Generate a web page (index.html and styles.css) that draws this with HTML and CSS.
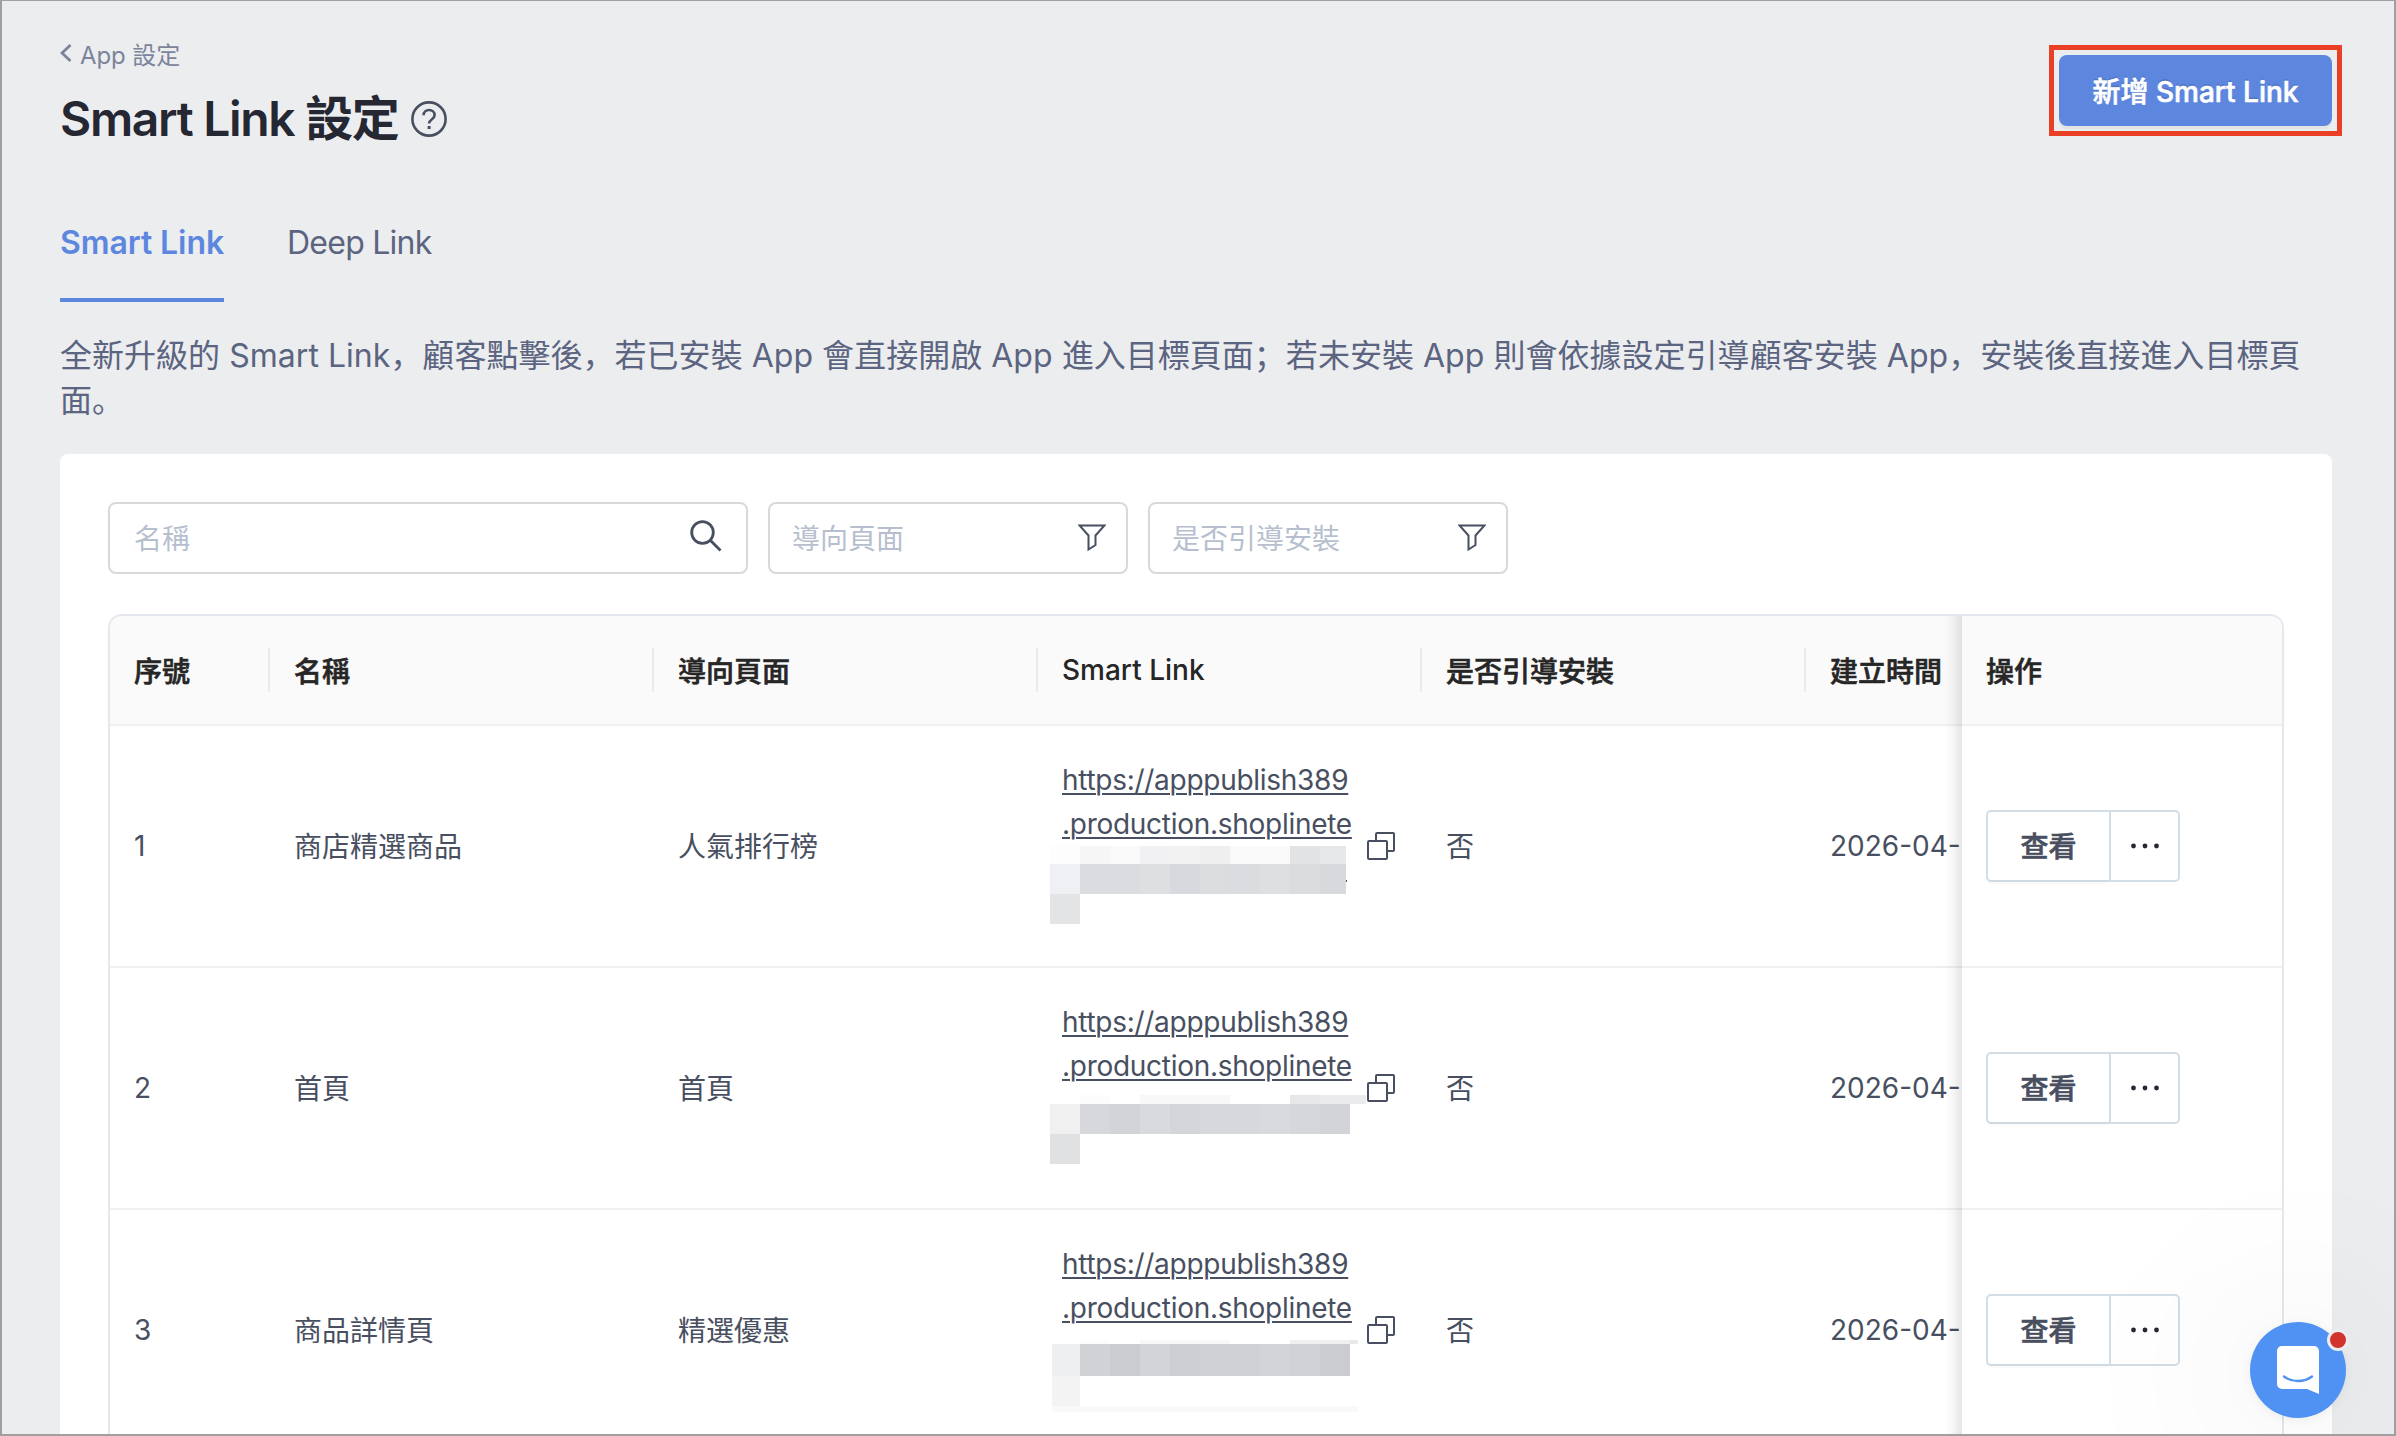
FILE: index.html
```html
<!DOCTYPE html>
<html lang="zh">
<head>
    <meta charset="UTF-8">
    <title>Smart Link 設定</title>
    <link rel="stylesheet" href="styles.css">
</head>
<body>
    <svg class="sprite">
        <symbol id="icon-filter" viewBox="0 0 28 28">
            <path d="M1.5 1.5h25l-9 10v9.5l-7 4.5v-14z" fill="none" stroke="#484f60" stroke-width="2"/>
        </symbol>
        <symbol id="icon-copy" viewBox="0 0 28 28">
            <path d="M9 9V2a1 1 0 0 1 1-1h16a1 1 0 0 1 1 1v16a1 1 0 0 1-1 1h-6M2 9h17a1 1 0 0 1 1 1v16a1 1 0 0 1-1 1H2a1 1 0 0 1-1-1V10a1 1 0 0 1 1-1z" fill="none" stroke="#484f60" stroke-width="2"/>
        </symbol>
        <symbol id="icon-more" viewBox="0 0 30 6">
            <circle cx="3.5" cy="3" r="2.4"/>
            <circle cx="15" cy="3" r="2.4"/>
            <circle cx="26.5" cy="3" r="2.4"/>
        </symbol>
    </svg>
    <header class="page-header">
        <div>
            <a class="back">
                <svg class="back-icon" viewBox="0 0 12 18"><path d="M10.5 1L2 9l8.5 8" fill="none" stroke="#7b849b" stroke-width="2.8"/></svg>
                <span>App 設定</span>
            </a>
            <h1 class="title">
                <span>Smart Link 設定</span>
                <svg class="help-icon" viewBox="0 0 36 36" fill="none" stroke="#484f60">
                    <circle cx="18" cy="18" r="16.6" stroke-width="2.6"/>
                    <path d="M12.6 14.2c0-3.2 2.4-5.2 5.5-5.2s5.5 2 5.5 4.9c0 2.3-1.3 3.4-2.9 4.6-1.7 1.2-2.6 2.1-2.6 4" stroke-width="2.6"/>
                    <path d="M18.1 25v3" stroke-width="3"/>
                </svg>
            </h1>
        </div>
        <div class="highlight">
            <button class="btn-primary">新增 Smart Link</button>
        </div>
    </header>
    <nav class="tabs">
        <a class="tab active">Smart Link</a>
        <a class="tab">Deep Link</a>
    </nav>
    <p class="description">全新升級的 Smart Link，顧客點擊後，若已安裝 App 會直接開啟 App 進入目標頁面；若未安裝 App 則會依據設定引導顧客安裝 App，安裝後直接進入目標頁面。</p>
    <main class="card">
        <div class="filters">
            <div class="field search">
                <span>名稱</span>
                <svg class="search-icon" viewBox="0 0 32 32" fill="none" stroke="#484f60" stroke-width="2.8"><circle cx="12.5" cy="12.5" r="10.8"/><path d="M20 20l10.5 10.5"/></svg>
            </div>
            <div class="field">
                <span>導向頁面</span>
                <svg class="filter-icon"><use href="#icon-filter"/></svg>
            </div>
            <div class="field">
                <span>是否引導安裝</span>
                <svg class="filter-icon"><use href="#icon-filter"/></svg>
            </div>
        </div>
        <div class="table">
            <div class="row head">
                <div class="cell">序號</div>
                <div class="cell">名稱</div>
                <div class="cell">導向頁面</div>
                <div class="cell">Smart Link</div>
                <div class="cell">是否引導安裝</div>
                <div class="cell">建立時間</div>
                <div class="cell fixed">操作</div>
            </div>
            <div class="row">
                <div class="cell">1</div>
                <div class="cell name">商店精選商品</div>
                <div class="cell name">人氣排行榜</div>
                <div class="cell link-cell">
                    <a class="link">https://apppublish389<br>.production.shoplinete</a>
                    <svg class="copy-icon"><use href="#icon-copy"/></svg>
                    <svg class="mosaic" viewBox="0 0 320 78">
                        <path fill="#fdfdfd" d="M0 0h30v18H0z"/>
                        <path fill="#f6f6f6" d="M30 0h30v18H30z"/>
                        <path fill="#f9f9f9" d="M60 0h30v18H60z"/>
                        <path fill="#f1f1f3" d="M90 0h30v18H90z"/>
                        <path fill="#f2f2f2" d="M120 0h30v18h-30z"/>
                        <path fill="#efeff0" d="M150 0h30v18h-30z"/>
                        <path fill="#f9f9f9" d="M180 0h60v18h-60z"/>
                        <path fill="#e2e3e5" d="M240 0h30v18h-30z"/>
                        <path fill="#e6e7e9" d="M270 0h26v18h-26z"/>
                        <path fill="#eff0f3" d="M0 18h30v30H0z"/>
                        <path fill="#dbdce0" d="M30 18h60v30H30z"/>
                        <path fill="#dedfe1" d="M90 18h30v30H90z"/>
                        <path fill="#d8d9de" d="M120 18h30v30h-30z"/>
                        <path fill="#dcddde" d="M150 18h30v30h-30z"/>
                        <path fill="#dbdce0" d="M180 18h30v30h-30z"/>
                        <path fill="#dedfe1" d="M210 18h30v30h-30z"/>
                        <path fill="#dbdcdd" d="M240 18h30v30h-30z"/>
                        <path fill="#d8d9dd" d="M270 18h26v30h-26z"/>
                        <path fill="#484f60" d="M296 34h1v2h-1z"/>
                        <path fill="#e3e4e6" d="M0 48h30v30H0z"/>
                    </svg>
                </div>
                <div class="cell name">否</div>
                <div class="cell">2026-04-</div>
                <div class="cell fixed">
                    <div class="btn-group">
                        <button class="btn-view">查看</button>
                        <button class="btn-more"><svg class="more-icon"><use href="#icon-more"/></svg></button>
                    </div>
                </div>
            </div>
            <div class="row">
                <div class="cell">2</div>
                <div class="cell name">首頁</div>
                <div class="cell name">首頁</div>
                <div class="cell link-cell">
                    <a class="link">https://apppublish389<br>.production.shoplinete</a>
                    <svg class="copy-icon"><use href="#icon-copy"/></svg>
                    <svg class="mosaic" viewBox="0 0 320 78">
                        <path fill="#fcfcfc" d="M30 7h30v9H30z"/>
                        <path fill="#f8f8f8" d="M90 7h90v9H90z"/>
                        <path fill="#e7e7e9" d="M240 7h30v9h-30z"/>
                        <path fill="#ebebed" d="M270 7h46v9h-46z"/>
                        <path fill="#f0f0f0" d="M0 16h30v30H0z"/>
                        <path fill="#d7d8dc" d="M30 16h30v30H30z"/>
                        <path fill="#d3d4d8" d="M60 16h30v30H60z"/>
                        <path fill="#d9dadd" d="M90 16h30v30H90z"/>
                        <path fill="#d4d5d9" d="M120 16h30v30h-30z"/>
                        <path fill="#d7d8db" d="M150 16h60v30h-60z"/>
                        <path fill="#d9dadd" d="M210 16h30v30h-30z"/>
                        <path fill="#d6d7da" d="M240 16h30v30h-30z"/>
                        <path fill="#d3d4d8" d="M270 16h30v30h-30z"/>
                        <path fill="#e0e1e3" d="M0 46h30v30H0z"/>
                    </svg>
                </div>
                <div class="cell name">否</div>
                <div class="cell">2026-04-</div>
                <div class="cell fixed">
                    <div class="btn-group">
                        <button class="btn-view">查看</button>
                        <button class="btn-more"><svg class="more-icon"><use href="#icon-more"/></svg></button>
                    </div>
                </div>
            </div>
            <div class="row">
                <div class="cell">3</div>
                <div class="cell name">商品詳情頁</div>
                <div class="cell name">精選優惠</div>
                <div class="cell link-cell">
                    <a class="link">https://apppublish389<br>.production.shoplinete</a>
                    <svg class="copy-icon"><use href="#icon-copy"/></svg>
                    <svg class="mosaic" viewBox="0 0 320 78">
                        <path fill="#fcfcfc" d="M30 10h30v4H30z"/>
                        <path fill="#f8f8f8" d="M90 10h90v4H90z"/>
                        <path fill="#f0f0f0" d="M240 10h60v4h-60z"/>
                        <path fill="#e9e9ea" d="M300 10h8v4h-8z"/>
                        <path fill="#eeeff1" d="M2 14h28v32H2z"/>
                        <path fill="#d1d2d5" d="M30 14h30v32H30z"/>
                        <path fill="#cbccd0" d="M60 14h30v32H60z"/>
                        <path fill="#d3d4d8" d="M90 14h30v32H90z"/>
                        <path fill="#cecfd3" d="M120 14h30v32h-30z"/>
                        <path fill="#d0d1d4" d="M150 14h60v32h-60z"/>
                        <path fill="#d3d4d8" d="M210 14h30v32h-30z"/>
                        <path fill="#d1d2d5" d="M240 14h30v32h-30z"/>
                        <path fill="#cbccd0" d="M270 14h30v32h-30z"/>
                        <path fill="#f3f3f3" d="M2 46h28v30H2z"/>
                        <path fill="#f9f9f9" d="M2 76h306v6H2z"/>
                    </svg>
                </div>
                <div class="cell name">否</div>
                <div class="cell">2026-04-</div>
                <div class="cell fixed">
                    <div class="btn-group">
                        <button class="btn-view">查看</button>
                        <button class="btn-more"><svg class="more-icon"><use href="#icon-more"/></svg></button>
                    </div>
                </div>
            </div>
        </div>
    </main>
    <div class="chat">
        <svg class="chat-icon" viewBox="0 0 42 48">
            <path fill="#fff" d="M5 0h32a5 5 0 0 1 5 5v43l-12-5H5a5 5 0 0 1-5-5V5a5 5 0 0 1 5-5z"/>
            <path d="M7 30.5c8 6 20 6 28 0" fill="none" stroke="#4f92f3" stroke-width="2.4" stroke-linecap="round"/>
        </svg>
        <span class="chat-badge"></span>
    </div>
</body>
</html>
```

FILE: styles.css
```css
* {
    box-sizing: border-box;
}
body {
    margin: 0;
    height: 1436px;
    padding: 0 62px 0 58px;
    border: 2px solid #a0a0a2;
    border-top-width: 1px;
    background: #ecedef;
    color: #484f60;
    font-family: Inter, "Noto Sans CJK SC", sans-serif;
    font-size: 28px;
    overflow: hidden;
    position: relative;
}
button {
    margin: 0;
    padding: 0;
    font: inherit;
}
svg {
    display: block;
    flex-shrink: 0;
}
.sprite {
    width: 0;
    height: 0;
    position: absolute;
}
.page-header {
    display: flex;
    justify-content: space-between;
    align-items: flex-start;
    height: 183px;
    padding-top: 34px;
}
.back {
    display: flex;
    align-items: center;
    gap: 8px;
    height: 36px;
    font-size: 24px;
    color: #7b849b;
    letter-spacing: -0.1px;
}
.back-icon {
    width: 12px;
    height: 18px;
}
.title {
    display: flex;
    align-items: center;
    gap: 12px;
    height: 56px;
    margin: 20px 0 0;
    font-size: 48px;
    font-weight: 600;
    line-height: 56px;
    letter-spacing: -1.3px;
    color: #252733;
}
.help-icon {
    width: 36px;
    height: 36px;
}
.highlight {
    margin: 10px -10px 0 0;
    padding: 5px;
    border: 5px solid #ea4025;
}
.btn-primary {
    display: block;
    width: 273px;
    height: 71px;
    padding-bottom: 2px;
    border: 0;
    border-radius: 8px;
    background: #5d87df;
    color: #fff;
    font-weight: 500;
    -webkit-text-stroke: 0.6px #fff;
    text-shadow: 0 -2px 0 rgba(0, 0, 0, 0.12);
    box-shadow: 0 3px 0 rgba(0, 0, 0, 0.04);
}
.tabs {
    display: flex;
    gap: 63px;
    height: 118px;
    font-size: 32px;
    line-height: 117px;
    color: #5b6480;
}
.tab {
    letter-spacing: -0.75px;
}
.tab.active {
    color: #5d87df;
    font-weight: 600;
    letter-spacing: -0.09px;
    border-bottom: 4px solid #5d87df;
}
.description {
    margin: 31px 0;
    font-size: 32px;
    line-height: 45px;
    letter-spacing: 0.03px;
    color: #5b6480;
}
.card {
    height: 1000px;
    padding: 48px;
    border-radius: 8px;
    background: #fff;
}
.filters {
    display: flex;
    gap: 20px;
}
.field {
    display: flex;
    justify-content: space-between;
    align-items: center;
    width: 360px;
    height: 72px;
    padding: 0 20px 0 22px;
    border: 2px solid #d9d9d9;
    border-radius: 8px;
    color: #b7bfcf;
}
.field span {
    padding-bottom: 2px;
}
.field.search {
    width: 640px;
    padding: 0 24px;
}
.search-icon {
    width: 32px;
    height: 32px;
    margin-bottom: 4px;
}
.filter-icon {
    width: 28px;
    height: 28px;
}
.table {
    margin-top: 40px;
    border: 2px solid #e4e8ee;
    border-radius: 14px;
    overflow: hidden;
}
.row {
    display: grid;
    grid-template-columns: 160px 384px 384px 384px 384px 156px 320px;
    height: 242px;
    border-bottom: 2px solid #f0f0f0;
}
.row.head {
    height: 110px;
    background: #fafafa;
    color: #262626;
    font-weight: 500;
    -webkit-text-stroke: 0.6px #262626;
}
.row.head .cell:nth-child(4) {
    -webkit-text-stroke: 0;
}
.cell {
    display: flex;
    align-items: center;
    padding-left: 24px;
    white-space: nowrap;
    position: relative;
}
.cell.name {
    padding-bottom: 2px;
}
.head .cell:nth-child(-n+5)::after {
    content: "";
    width: 2px;
    height: 44px;
    margin-left: auto;
    background: #ebebeb;
}
.cell.fixed::before {
    content: "";
    position: absolute;
    top: 0;
    right: 100%;
    bottom: -2px;
    width: 60px;
    box-shadow: inset -20px 0 16px -16px rgba(5, 5, 5, 0.15);
}
.link-cell {
    gap: 16px;
}
.link {
    width: 289px;
    height: 176px;
    line-height: 44px;
    letter-spacing: -0.28px;
    text-decoration: underline;
    text-decoration-thickness: 2px;
    text-underline-offset: 3px;
}
.copy-icon {
    width: 28px;
    height: 28px;
}
/* hides the rest of the link */
.mosaic {
    position: absolute;
    top: 120px;
    left: 12px;
    width: 320px;
    height: 78px;
    overflow: visible;
}
.btn-group {
    display: flex;
    height: 72px;
    border: 2px solid #d3dde6;
    border-radius: 5px;
}
.btn-view {
    width: 121px;
    padding-bottom: 2px;
    border: 0;
    background: none;
    color: #484f60;
    font-weight: 500;
    -webkit-text-stroke: 0.6px #484f60;
    box-shadow: 0 4px 0 rgba(0, 0, 0, 0.015);
}
.btn-more {
    display: flex;
    align-items: center;
    justify-content: center;
    width: 69px;
    border: 0;
    border-left: 2px solid #d3dde6;
    background: none;
}
.more-icon {
    width: 30px;
    height: 6px;
    fill: #252733;
}
.chat {
    display: flex;
    align-items: center;
    justify-content: center;
    position: absolute;
    right: 48px;
    bottom: 16px;
    width: 96px;
    height: 96px;
    border-radius: 50%;
    background: #4f92f3;
    box-shadow: 0 2px 12px rgba(0, 0, 0, 0.06), 0 4px 200px 20px rgba(0, 0, 0, 0.09);
}
.chat-icon {
    width: 42px;
    height: 48px;
}
.chat-badge {
    position: absolute;
    top: 7px;
    right: -3px;
    width: 22px;
    height: 22px;
    border: 3px solid #ecedef;
    border-radius: 50%;
    background: #d0342c;
}
```
